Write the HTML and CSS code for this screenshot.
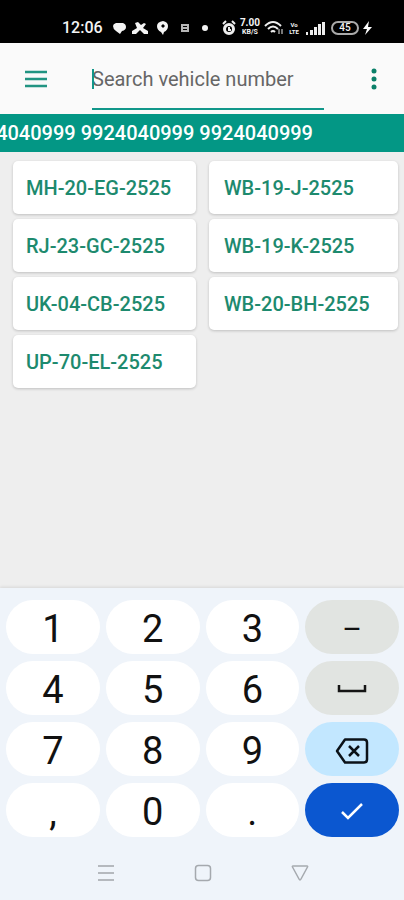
FILE: index.html
```html
<!DOCTYPE html>
<html lang="en">
<head>
<meta charset="utf-8">
<meta name="viewport" content="width=device-width, initial-scale=1">
<title>Vehicle search</title>
<link rel="stylesheet" href="styles.css">
</head>
<body>
<header class="status">
  <time class="clock">12:06</time>
  <svg class="notices" width="102" height="16" viewBox="0 0 102 16" fill="#f4f4f4" aria-hidden="true">
    <path d="M3 3h7q3 1 3 4 0 3-4 4l-2 3-4-3Q0 9 0 6q0-2 3-3z"/>
    <path d="M22 3l3-1 3 3 3-2 2 1-3 4 5 3v3h-4l-4-4-4 4h-4v-3l5-3z"/>
    <path fill-rule="evenodd" d="M50 1q5 1 5 5 0 4-4 6l-1 3-2-3q-4-2-4-6t6-5zm0 3-2 2 2 2 2-2z"/>
    <path fill-rule="evenodd" d="M68 4h8v8h-8zm2 2v1h4V6zm0 3v1h4V9z" opacity=".75"/>
    <circle cx="92" cy="8" r="3"/>
  </svg>
  <svg class="alarm" width="14" height="16" viewBox="0 0 14 16" fill="none" stroke="#eee" aria-hidden="true">
    <circle cx="7" cy="9" r="4.500" stroke-width="3"/><path d="M7 7v3h2M1 4l3-3M13 4l-3-3" stroke-width="2"/>
  </svg>
  <span class="speed"><b>7.00</b><small>KB/S</small></span>
  <svg class="wifi" width="20" height="16" viewBox="0 0 20 16" fill="none" stroke="#eee" stroke-width="2" aria-hidden="true">
    <path d="M1 6q8-8 16 0M4 9q5-5 10 0M7 12q2-2 4 0"/><path d="M15 9v5M18 14V9" stroke-width="1"/>
  </svg>
  <span class="volte"><b>Vo</b><b>LTE</b></span>
  <svg class="signal" width="20" height="14" viewBox="0 0 20 14" fill="#eee" aria-hidden="true">
    <path d="M0 11h2v3H0zM4 9h3v5H4zM8 6h3v8H8zM12 3h3v11h-3zM16 1h3v13h-3z"/>
  </svg>
  <span class="battery">45</span>
  <svg class="bolt" width="9" height="14" viewBox="0 0 9 14" fill="#fff" aria-hidden="true"><path d="M6 0 0 8h4L2 14l7-8H5z"/></svg>
</header>

<form class="appbar">
  <button type="button" class="icon" aria-label="Menu">
    <svg width="24" height="18" viewBox="0 0 24 18" stroke="#219482" stroke-width="2.500"><path d="M1 2h22M1 9h22M1 16h22"/></svg>
  </button>
  <div class="search">
    <input type="text" placeholder="Search vehicle number" aria-label="Search vehicle number">
    <span class="caret"></span>
  </div>
  <button type="button" class="icon" aria-label="More options">
    <svg width="6" height="22" viewBox="0 0 6 22" fill="#0b8069"><circle cx="3" cy="3" r="2.500"/><circle cx="3" cy="11" r="2.500"/><circle cx="3" cy="19" r="2.500"/></svg>
  </button>
</form>

<div class="ticker"><span>9924040999 9924040999 9924040999</span></div>

<main>
  <ul class="results">
    <li><a href="#">MH-20-EG-2525</a></li>
    <li><a href="#">WB-19-J-2525</a></li>
    <li><a href="#">RJ-23-GC-2525</a></li>
    <li><a href="#">WB-19-K-2525</a></li>
    <li><a href="#">UK-04-CB-2525</a></li>
    <li><a href="#">WB-20-BH-2525</a></li>
    <li><a href="#">UP-70-EL-2525</a></li>
  </ul>
</main>

<section class="keyboard" aria-label="Keyboard">
  <div class="keys">
    <button type="button">1</button>
    <button type="button">2</button>
    <button type="button">3</button>
    <button type="button" class="soft">–</button>
    <button type="button">4</button>
    <button type="button">5</button>
    <button type="button">6</button>
    <button type="button" class="soft" aria-label="Space">
      <svg width="30" height="24" viewBox="0 0 30 24" fill="none" stroke="#151515" stroke-width="2.500"><path d="M2 7v6h26V7"/></svg>
    </button>
    <button type="button">7</button>
    <button type="button">8</button>
    <button type="button">9</button>
    <button type="button" class="erase" aria-label="Backspace">
      <svg width="34" height="28" viewBox="0 0 34 28" fill="none" stroke="#0b1218" stroke-width="2.500"><path d="M10 2.500h19q3 0 3 3v17q0 3-3 3H10L2 14z" stroke-linejoin="round"/><path d="M14 9l10 10M24 9l-10 10"/></svg>
    </button>
    <button type="button">,</button>
    <button type="button">0</button>
    <button type="button">.</button>
    <button type="button" class="done" aria-label="Done">
      <svg width="24" height="20" viewBox="0 0 24 20" fill="none" stroke="#fff" stroke-width="2.500"><path d="M2 10l6 6L22 2"/></svg>
    </button>
  </div>
  <nav class="system">
    <button type="button" aria-label="Recent apps"><svg width="18" height="18" viewBox="0 0 18 18" stroke="#b5b9be" stroke-width="2"><path d="M1 2h16M1 9h16M1 16h16"/></svg></button>
    <button type="button" aria-label="Home"><svg width="18" height="18" viewBox="0 0 18 18" fill="none" stroke="#a5a9ae" stroke-width="1.500"><rect x="1.500" y="1.500" width="15" height="15" rx="3"/></svg></button>
    <button type="button" aria-label="Back"><svg width="18" height="18" viewBox="0 0 18 18" fill="none" stroke="#a5a9ae" stroke-width="1.500" stroke-linejoin="round"><path d="M2 2h14q1 0 .5 1L10 15q-1 2-2 0L1.500 3Q1 2 2 2z"/></svg></button>
  </nav>
</section>
</body>
</html>
```
FILE: styles.css
```css
* { box-sizing: border-box; }

body {
  margin: 0;
  min-height: 100vh;
  display: flex;
  flex-direction: column;
  background: #eeeeee;
  font-family: Roboto, "Liberation Sans", sans-serif;
}

button {
  border: 0;
  padding: 0;
  background: none;
  font-family: inherit;
  display: flex;
  align-items: center;
  justify-content: center;
}

.status {
  display: flex;
  align-items: center;
  height: 43px;
  padding: 12px 32px 0 62px;
  background: #000;
  color: #f4f4f4;
}
.clock { font-size: 16px; font-weight: 500; line-height: 20px; }
.notices { margin-left: 10px; flex: none; }
.alarm { margin-left: auto; flex: none; }
.speed, .volte { display: flex; flex-direction: column; align-items: center; }
.speed { margin: 0 4px; }
.speed b { font-size: 10px; line-height: 10px; }
.speed small { font-size: 7px; line-height: 9px; font-weight: 700; }
.wifi { flex: none; }
.volte { width: 12px; margin: 0 6px 0 4px; }
.volte b { font-size: 6px; line-height: 7px; }
.signal { flex: none; }
.battery {
  width: 28px;
  margin: 0 4px 0 5px;
  border: 2px solid #aaa;
  border-radius: 7px;
  font-size: 10px;
  font-weight: 500;
  line-height: 10px;
  text-align: center;
}
.bolt { flex: none; }

.appbar {
  display: flex;
  align-items: center;
  height: 71px;
  padding: 0 14px;
  background: #fafafa;
}
.icon { width: 44px; height: 44px; }
.icon:last-child { width: 32px; }
.search {
  position: relative;
  flex: 1;
  margin: 0 34px;
  align-self: stretch;
  display: flex;
  padding-bottom: 4px;
}
.search input {
  width: 100%;
  min-width: 0;
  border: 0;
  border-bottom: 2px solid #11978a;
  border-radius: 0;
  padding: 7px 0 0;
  background: none;
  font: 400 20px Roboto, "Liberation Sans", sans-serif;
  color: #333;
  outline: 0;
}
.search input::placeholder { color: #666; opacity: 1; }
.caret {
  position: absolute;
  left: 0;
  top: 26px;
  width: 2px;
  height: 20px;
  background: #11978a;
}

.ticker {
  display: flex;
  justify-content: flex-end;
  height: 38px;
  padding-right: 91px;
  overflow: hidden;
  background: #039785;
  color: #fff;
  font-size: 20px;
  font-weight: 500;
  line-height: 38px;
  white-space: nowrap;
}

main { flex: 1; }
.results {
  list-style: none;
  margin: 0;
  padding: 9px 6px 0 13px;
  display: grid;
  grid-template-columns: 183fr 189fr;
  gap: 5px 13px;
}
.results a {
  display: block;
  height: 53px;
  padding: 0 13px;
  border-radius: 5px;
  background: #fff;
  box-shadow: 0 1px 3px rgba(0, 0, 0, 0.2);
  color: #1d8a6e;
  font-size: 20px;
  font-weight: 500;
  line-height: 54px;
  text-decoration: none;
  white-space: nowrap;
}
.results li:nth-child(even) a { padding-left: 15px; }

.keyboard {
  padding: 12px 5px 0 6px;
  background: #eff4fa;
  box-shadow: 0 -1px 3px rgba(0, 0, 0, 0.1);
}
.keys {
  display: grid;
  grid-template-columns: repeat(4, 1fr);
  gap: 7px 6px;
}
.keys button {
  height: 54px;
  padding-top: 4px;
  border-radius: 27px;
  background: #fff;
  color: #111;
  font-size: 38px;
  font-weight: 400;
  line-height: 50px;
}
.keys .soft { background: #e1e4e1; font-size: 30px; }
.keys .erase { background: #c2e7ff; }
.keys .done { background: #0b57d0; }

.system {
  display: flex;
  justify-content: center;
  gap: 30px;
  padding: 12px 0 3px;
}
.system button { width: 67px; height: 48px; }
```
